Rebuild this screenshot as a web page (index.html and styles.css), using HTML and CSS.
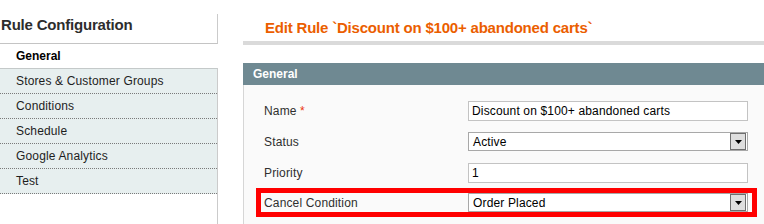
FILE: index.html
```html
<!DOCTYPE html>
<html>
<head>
<meta charset="utf-8">
<link rel="stylesheet" href="styles.css">
</head>
<body>
<div class="page">
  <aside class="side">
    <h3 class="side-title">Rule Configuration</h3>
    <div class="tab-active">General</div>
    <ul class="tabs">
      <li>Stores &amp; Customer Groups</li>
      <li>Conditions</li>
      <li>Schedule</li>
      <li>Google Analytics</li>
      <li>Test</li>
    </ul>
    <div class="side-fill"></div>
  </aside>
  <main class="main">
    <div class="content-header">
      <h3 class="page-title">Edit Rule `Discount on $100+ abandoned carts`</h3>
    </div>
    <div class="fs-head">General</div>
    <div class="fieldset">
      <div class="row">
        <div class="label">Name <span class="req">*</span></div>
        <div class="control">Discount on $100+ abandoned carts</div>
      </div>
      <div class="row">
        <div class="label">Status</div>
        <div class="control select"><span class="val">Active</span><span class="btn"><svg width="7" height="4" viewBox="0 0 7 4"><path d="M0 0H7L3.5 4Z" fill="#000"/></svg></span></div>
      </div>
      <div class="row">
        <div class="label">Priority</div>
        <div class="control">1</div>
      </div>
      <div class="row hl">
        <div class="label">Cancel Condition</div>
        <div class="control select"><span class="val">Order Placed</span><span class="btn"><svg width="7" height="4" viewBox="0 0 7 4"><path d="M0 0H7L3.5 4Z" fill="#000"/></svg></span></div>
      </div>
    </div>
  </main>
</div>
</body>
</html>
```
FILE: styles.css
```css
* { box-sizing: border-box; }
body {
  margin: 0;
  font: 12px "Liberation Sans", Arial, sans-serif;
  letter-spacing: 0.15px;
  color: #2f2f2f;
  background: #fff;
}
.page {
  display: flex;
  min-height: 100vh;
  overflow: hidden;
}
.side {
  width: 218px;
  flex: none;
  display: flex;
  flex-direction: column;
}
.side-title {
  margin: 14px 0 0;
  height: 30px;
  padding: 2px 0 0 1px;
  font-size: 15px;
  line-height: 18px;
  letter-spacing: -0.2px;
  font-weight: bold;
  color: #2d2d2d;
  border-right: 1px solid #cbcbcb;
  border-bottom: 1px solid #c4c4c4;
}
.tab-active {
  height: 24px;
  line-height: 24px;
  padding-left: 16px;
  font-weight: bold;
  color: #000;
  letter-spacing: 0;
}
.tabs {
  list-style: none;
  margin: 0;
  padding: 0;
  background: #e7efef;
  border-top: 1px solid #c4c9c9;
  border-right: 1px solid #cbcbcb;
}
.tabs li {
  height: 25px;
  line-height: 24px;
  padding-left: 16px;
  border-bottom: 1px dotted #7a7a7a;
  color: #1e1e1e;
}
.side-fill {
  flex: 1;
  border-right: 1px solid #cbcbcb;
}
.main {
  flex: 1;
  min-width: 0;
  margin-left: 25px;
  display: flex;
  flex-direction: column;
}
.content-header {
  padding: 18px 0 3px 22px;
  border-bottom: 4px solid #dadada;
}
.page-title {
  margin: 0;
  font-size: 15px;
  line-height: 20px;
  letter-spacing: -0.2px;
  font-weight: bold;
  color: #eb5e00;
  white-space: nowrap;
}
.fs-head {
  margin-top: 18px;
  height: 22px;
  line-height: 22px;
  padding-left: 10px;
  background: #6f8992;
  color: #fff;
  font-weight: bold;
  letter-spacing: 0;
}
.fieldset {
  flex: 1;
  background: #fafafa;
  border-left: 1px solid #d6d6d6;
  padding: 10px 0 8px 20px;
}
.row {
  display: flex;
  align-items: center;
  height: 31px;
}
.label {
  width: 204px;
  flex: none;
  color: #2f2f2f;
}
.req { color: #eb340a; }
.control {
  width: 280px;
  height: 20px;
  flex: none;
  border: 1px solid #c3c3c3;
  background: #fff;
  padding: 0 3px;
  line-height: 18px;
  color: #000;
}
.select {
  display: flex;
  align-items: center;
  justify-content: space-between;
  height: 19px;
  border-color: #a8a8a8;
  padding: 0 1px 0 4px;
}
.btn {
  width: 16px;
  height: 17px;
  border: 1px solid #6e6e6e;
  background: #dedede;
  display: flex;
  align-items: center;
  justify-content: center;
}
.btn svg { display: block; }
.row.hl {
  height: 29px;
  width: 501px;
  margin-left: -8px;
  padding-left: 3px;
  border: 5px solid #ff0000;
}
```
